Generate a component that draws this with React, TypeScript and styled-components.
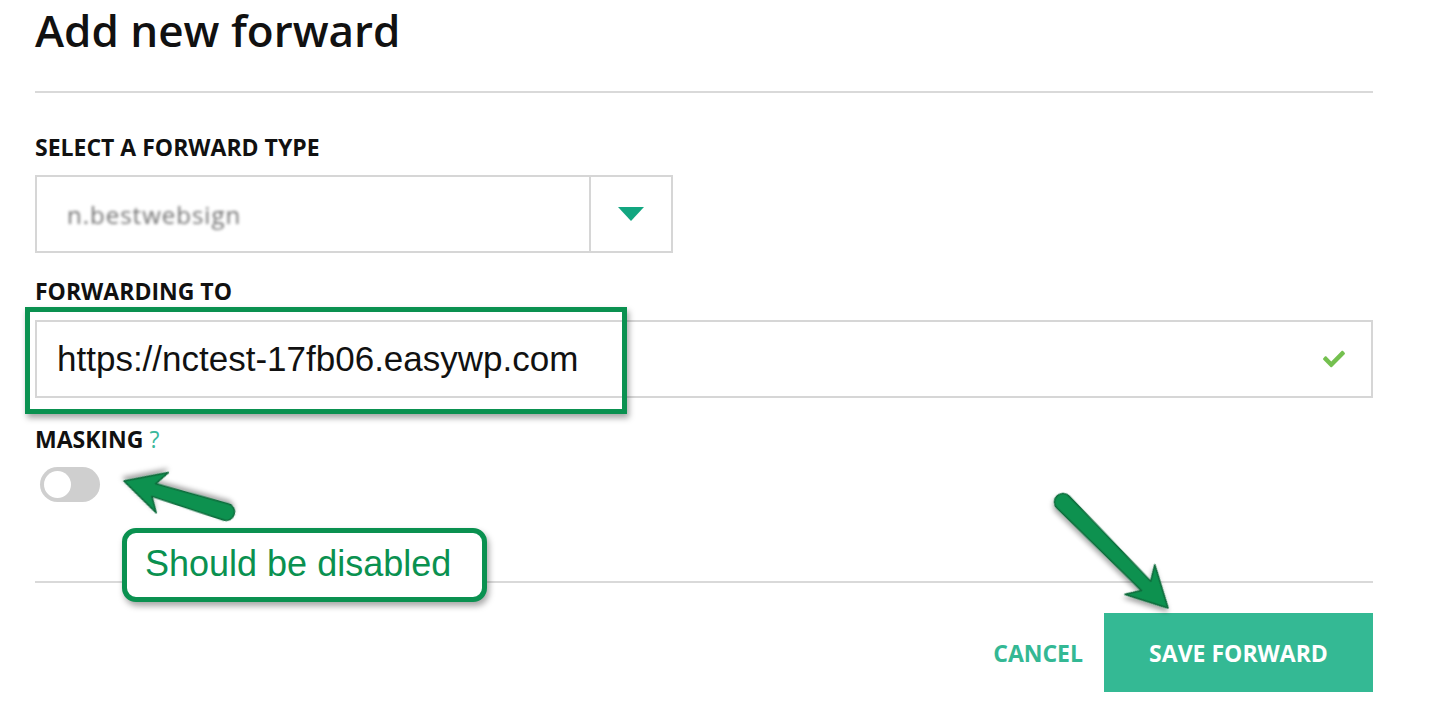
import { createGlobalStyle } from 'styled-components';
import styled from 'styled-components';
import { FaCheck } from 'react-icons/fa';

const GlobalStyle = createGlobalStyle`
  body {
    margin: 0;
    background: #ffffff;
    font-family: "Open Sans", "Liberation Sans", sans-serif;
    color: #111111;
  }
`;

const Page = styled.div`
  position: relative;
  width: 1429px;
  height: 719px;
  padding-left: 35px;
  box-sizing: border-box;
  overflow: hidden;
`;

const Content = styled.div`
  width: 1338px;
`;

const Title = styled.h1`
  margin: 0;
  font-size: 44px;
  line-height: 60px;
  font-weight: 600;
  color: #111111;
`;

const Rule = styled.div<{ $top: number }>`
  height: 2px;
  margin-top: ${(p) => p.$top}px;
  background: #d9d9d9;
`;

const Label = styled.div<{ $top: number }>`
  margin-top: ${(p) => p.$top}px;
  font-size: 23px;
  line-height: 26px;
  font-weight: 700;
  text-transform: uppercase;
  color: #111111;
`;

const Help = styled.span`
  margin-left: 6px;
  color: #3bb89b;
  font-weight: 400;
`;

const SelectBox = styled.div`
  display: flex;
  width: 638px;
  height: 78px;
  margin-top: 15px;
  border: 2px solid #d6d6d6;
  box-sizing: border-box;
`;

// the chosen domain is blurred out in the screenshot
const SelectValue = styled.div`
  flex: 1;
  display: flex;
  align-items: center;
  padding-left: 30px;
  font-size: 24px;
  color: #333333;
  letter-spacing: 1px;
  filter: blur(1.4px);
  opacity: 0.7;
`;

const SelectToggle = styled.div`
  width: 80px;
  display: flex;
  align-items: center;
  justify-content: center;
  border-left: 2px solid #d6d6d6;
`;

const Caret = styled.div`
  width: 0;
  height: 0;
  border-left: 13px solid transparent;
  border-right: 13px solid transparent;
  border-top: 14px solid #12a680;
`;

const InputField = styled.div`
  position: relative;
  display: flex;
  align-items: center;
  justify-content: space-between;
  height: 78px;
  margin-top: 16px;
  padding: 0 24px 0 20px;
  border: 2px solid #d6d6d6;
  box-sizing: border-box;
  font-family: "Liberation Sans", Arial, sans-serif;
  font-size: 35px;
  color: #111111;
`;

const ValidIcon = styled(FaCheck)`
  width: 26px;
  height: 22px;
  color: #74c04f;
`;

const Highlight = styled.div`
  position: absolute;
  left: -12px;
  top: -15px;
  width: 602px;
  height: 107px;
  border: 5px solid #0a9150;
  box-sizing: border-box;
  box-shadow: 2px 4px 6px rgba(0, 0, 0, 0.35);
  pointer-events: none;
`;

const Switch = styled.div`
  display: flex;
  align-items: center;
  width: 60px;
  height: 35px;
  margin: 15px 0 0 5px;
  padding-left: 4px;
  border-radius: 18px;
  background: #cfcfcf;
  box-sizing: border-box;
`;

const Knob = styled.div`
  width: 27px;
  height: 27px;
  border-radius: 50%;
  background: #ffffff;
`;

const Actions = styled.div`
  display: flex;
  justify-content: flex-end;
  align-items: center;
  margin-top: 30px;
`;

const ButtonBase = styled.button`
  border: none;
  font-family: "Open Sans", "Liberation Sans", sans-serif;
  font-size: 23px;
  font-weight: 700;
  text-transform: uppercase;
  cursor: pointer;
`;

const CancelButton = styled(ButtonBase)`
  background: none;
  color: #34b894;
  padding: 0 21px 0 0;
`;

const SaveButton = styled(ButtonBase)`
  width: 269px;
  height: 79px;
  background: #34b994;
  color: #ffffff;
`;

const Callout = styled.div`
  position: absolute;
  left: 122px;
  top: 528px;
  width: 365px;
  height: 74px;
  display: flex;
  align-items: center;
  padding: 0 0 3px 18px;
  border: 5px solid #0a9150;
  border-radius: 14px;
  background: #ffffff;
  box-sizing: border-box;
  box-shadow: 2px 4px 6px rgba(0, 0, 0, 0.35);
  font-family: "Liberation Sans", Arial, sans-serif;
  font-size: 36px;
  color: #0a9150;
`;

const Overlay = styled.svg`
  position: absolute;
  left: 0;
  top: 0;
  pointer-events: none;
`;

type ArrowProps = { x1: number; y1: number; x2: number; y2: number };

const Arrow = ({ x1, y1, x2, y2 }: ArrowProps) => {
  const len = Math.hypot(x2 - x1, y2 - y1);
  const angle = (Math.atan2(y2 - y1, x2 - x1) * 180) / Math.PI;
  const d = `M 0 -8.5 L ${len - 31} -6.5 L ${len - 40} -21 L ${len} 0 L ${len - 40} 21 L ${len - 31} 6.5 L 0 8.5 A 8.5 8.5 0 0 1 0 -8.5 Z`;
  return (
    <g transform={`translate(${x1} ${y1}) rotate(${angle})`} filter="url(#arrowShadow)">
      <path d={d} fill="#0a9150" stroke="#0b6b3b" strokeWidth={1.5} strokeLinejoin="round" />
    </g>
  );
};

export default function App() {
  return (
    <>
      <GlobalStyle />
      <Page>
        <Content>
          <Title>Add new forward</Title>
          <Rule $top={31} />

          <Label $top={41}>Select a forward type</Label>
          <SelectBox>
            <SelectValue>n.bestwebsign</SelectValue>
            <SelectToggle>
              <Caret />
            </SelectToggle>
          </SelectBox>

          <Label $top={25}>Forwarding to</Label>
          <InputField>
            <span>https://nctest-17fb06.easywp.com</span>
            <ValidIcon />
            <Highlight />
          </InputField>

          <Label $top={28}>
            Masking<Help>?</Help>
          </Label>
          <Switch>
            <Knob />
          </Switch>

          <Rule $top={79} />
          <Actions>
            <CancelButton>Cancel</CancelButton>
            <SaveButton>Save forward</SaveButton>
          </Actions>
        </Content>

        <Overlay width={1429} height={719}>
          <defs>
            <filter id="arrowShadow" x="-20%" y="-20%" width="140%" height="140%">
              <feDropShadow dx="2" dy="3" stdDeviation="2.5" floodOpacity="0.35" />
            </filter>
          </defs>
          <Arrow x1={226} y1={512} x2={124} y2={481} />
          <Arrow x1={1063} y1={502} x2={1168} y2={608} />
        </Overlay>
        <Callout>Should be disabled</Callout>
      </Page>
    </>
  );
}
